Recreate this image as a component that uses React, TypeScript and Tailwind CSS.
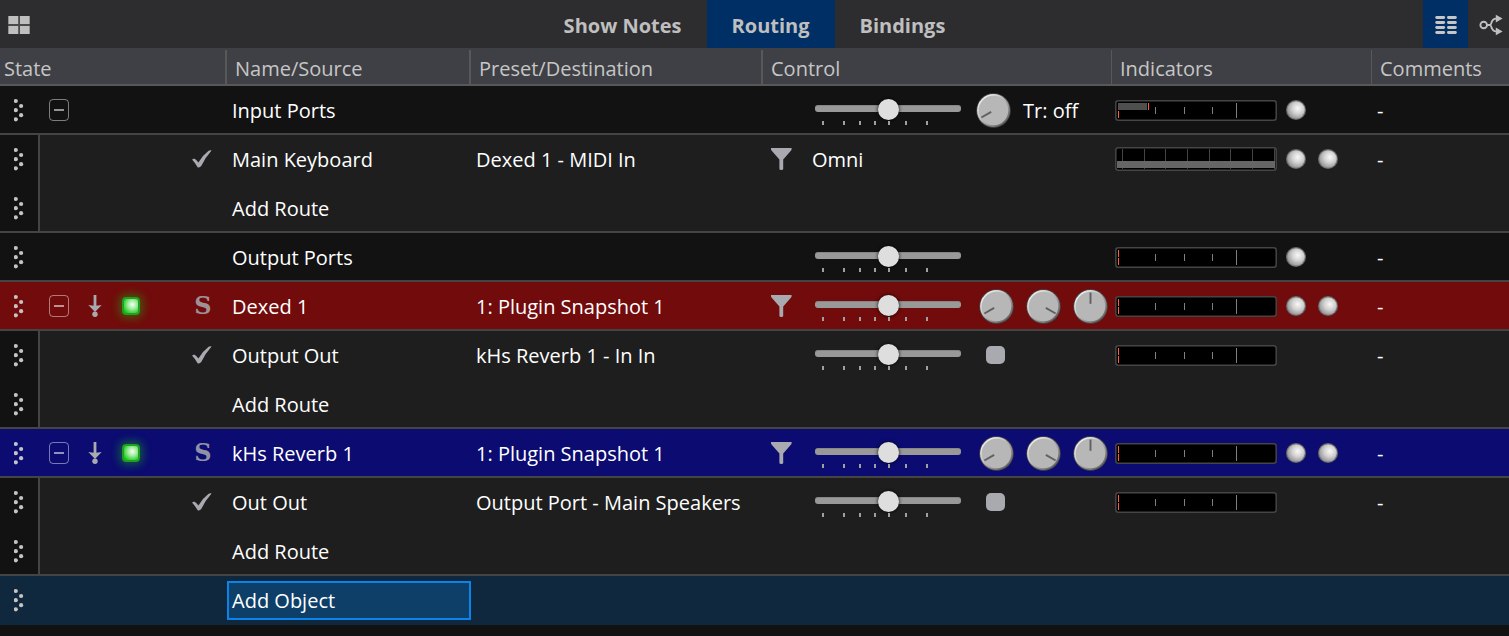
import type { ReactNode } from "react";

type Tone = "dark" | "child" | "red" | "blue" | "selected";

interface Row {
  tone: Tone;
  name: string;
  preset?: string;
  closesGroup?: boolean;
  collapsible?: boolean;
  active?: boolean;
  checked?: boolean;
  filter?: boolean;
  filterText?: string;
  fader?: boolean;
  transpose?: string;
  knobs?: number[];
  pad?: boolean;
  meter?: "audio" | "level" | "midi";
  lamps?: number;
  comment?: string;
}

const rows: Row[] = [
  { tone: "dark", name: "Input Ports", closesGroup: true, collapsible: true, fader: true, transpose: "Tr: off", meter: "level", lamps: 1, comment: "-" },
  { tone: "child", name: "Main Keyboard", preset: "Dexed 1 - MIDI In", checked: true, filter: true, filterText: "Omni", meter: "midi", lamps: 2, comment: "-" },
  { tone: "child", name: "Add Route", closesGroup: true },
  { tone: "dark", name: "Output Ports", closesGroup: true, fader: true, meter: "audio", lamps: 1, comment: "-" },
  { tone: "red", name: "Dexed 1", preset: "1: Plugin Snapshot 1", closesGroup: true, collapsible: true, active: true, filter: true, fader: true, knobs: [-120, 120, 0], meter: "audio", lamps: 2, comment: "-" },
  { tone: "child", name: "Output Out", preset: "kHs Reverb 1 - In In", checked: true, fader: true, pad: true, meter: "audio", comment: "-" },
  { tone: "child", name: "Add Route", closesGroup: true },
  { tone: "blue", name: "kHs Reverb 1", preset: "1: Plugin Snapshot 1", closesGroup: true, collapsible: true, active: true, filter: true, fader: true, knobs: [-120, 120, 0], meter: "audio", lamps: 2, comment: "-" },
  { tone: "child", name: "Out Out", preset: "Output Port - Main Speakers", checked: true, fader: true, pad: true, meter: "audio", comment: "-" },
  { tone: "child", name: "Add Route", closesGroup: true },
  { tone: "selected", name: "Add Object" },
];

const toneClass: Record<Tone, string> = {
  dark: "bg-[#121212]",
  child: "bg-[#1e1e1e]",
  red: "bg-[#720b0b]",
  blue: "bg-[#0b0b72]",
  selected: "bg-[#0f283e]",
};

function DragHandle() {
  return (
    <svg width="12" height="24" viewBox="0 0 12 24" fill="#c4c4c4" aria-hidden="true">
      <circle cx="1.8" cy="3" r="2.1" />
      <circle cx="7.1" cy="8" r="2.1" />
      <circle cx="1.8" cy="12.2" r="2.1" />
      <circle cx="7.1" cy="17.2" r="2.1" />
      <circle cx="1.8" cy="21.3" r="2.1" />
    </svg>
  );
}

function ArrowDown() {
  return (
    <svg width="14" height="22" viewBox="0 0 14 22" fill="#a9aab0" aria-hidden="true">
      <rect x="5.6" y="0" width="2.8" height="11" />
      <path d="M0.3 10 Q7 11.6 13.7 10 L7 17 Z" />
      <circle cx="7" cy="19.2" r="2.7" />
    </svg>
  );
}

function Check() {
  return (
    <svg width="20" height="18" viewBox="0 0 20 18" fill="#a9aab0" aria-hidden="true">
      <path d="M0.2 9.8 Q0.8 8.2 2.6 8.8 Q4.6 10.2 6.4 12.4 Q11 5 16.6 0.8 Q18.4 -0.2 19.6 0.6 Q13.4 7.4 9.4 15.8 Q7.6 18 5.6 17.2 Q3.4 13.2 0.2 9.8 Z" />
    </svg>
  );
}

function Funnel() {
  return (
    <svg width="21" height="22" viewBox="0 0 21 22" fill="#a9aab0" aria-hidden="true">
      <path d="M0 0 H20.6 V1.4 Q20.2 2.6 19.2 3.4 L12.2 11.4 V21 Q12.2 22 10.3 22 Q8.4 22 8.4 21 V11.4 L1.4 3.4 Q0.4 2.6 0 1.4 Z" />
    </svg>
  );
}

function Fader({ label }: { label: string }) {
  return (
    <div className="flex w-[146px] shrink-0 flex-col">
      <input
        type="range"
        defaultValue={50}
        aria-label={label}
        className="h-[21px] w-full appearance-none bg-transparent [&::-webkit-slider-runnable-track]:h-[7px] [&::-webkit-slider-runnable-track]:rounded-[3px] [&::-webkit-slider-runnable-track]:border-t [&::-webkit-slider-runnable-track]:border-[#868686] [&::-webkit-slider-runnable-track]:bg-[#999999] [&::-webkit-slider-thumb]:-mt-[7px] [&::-webkit-slider-thumb]:size-[21px] [&::-webkit-slider-thumb]:appearance-none [&::-webkit-slider-thumb]:rounded-full [&::-webkit-slider-thumb]:bg-[#dedede] [&::-webkit-slider-thumb]:shadow-[0_0_3px_1px_rgba(0,0,0,0.5)]"
      />
      <svg width="146" height="6" viewBox="0 0 146 6" fill="#a0a0a0" aria-hidden="true">
        {[7, 28, 44, 59, 73, 90, 111].map((x) => (
          <rect key={x} x={x} y="2" width="2" height="4" />
        ))}
      </svg>
    </div>
  );
}

function Knob({ angle, label }: { angle: number; label: string }) {
  return (
    <button type="button" aria-label={label} className="size-[35px] shrink-0">
      <svg width="35" height="35" viewBox="0 0 35 35" aria-hidden="true">
        <defs>
          <linearGradient id="knobRim" x1="0.15" y1="0.15" x2="0.85" y2="0.85">
            <stop offset="0" stopColor="#eeeeee" />
            <stop offset="0.5" stopColor="#b4b4b4" />
            <stop offset="1" stopColor="#666666" />
          </linearGradient>
        </defs>
        <circle cx="17.5" cy="17.5" r="17.2" fill="#4a4a4a" />
        <circle cx="17.5" cy="17.5" r="16.4" fill="url(#knobRim)" />
        <circle cx="17.5" cy="17.5" r="14.8" fill="#b7b7b7" />
        <path d="M17.5 3.5 V14.8" stroke="#606060" strokeWidth="1.9" transform={`rotate(${angle} 17.5 17.5)`} />
      </svg>
    </button>
  );
}

function Meter({ kind }: { kind: "audio" | "level" | "midi" }) {
  if (kind === "midi") {
    return (
      <svg width="162" height="24" viewBox="0 0 162 24" role="img" aria-label="MIDI activity">
        <rect x="0.8" y="0.8" width="160.4" height="22.4" rx="2.5" fill="#000000" stroke="#454545" strokeWidth="1.5" />
        {[7, 29, 50, 72, 94, 115, 137, 159].map((x) => (
          <rect key={x} x={x} y="2" width="1" height="20" fill="#444444" />
        ))}
        <rect x="2" y="14" width="158" height="7" fill="#666666" />
      </svg>
    );
  }
  const level = kind === "level";
  return (
    <svg width="162" height="21" viewBox="0 0 162 21" role="img" aria-label="Audio level">
      <rect x="0.8" y="0.8" width="160.4" height="19.4" rx="2.5" fill="#000000" stroke="#454545" strokeWidth="1.5" />
      {level && <rect x="3" y="3" width="29" height="7" fill="#4f4f4f" />}
      <rect x={level ? 33 : 3} y="3" width="1" height="7" fill="#ff5e3a" />
      <rect x="3" y="11" width="1" height="7" fill="#ff5e3a" />
      {[40, 69, 97].map((x) => (
        <rect key={x} x={x} y="7" width="1" height="7" fill="#808080" />
      ))}
      <rect x="121" y="3" width="1" height="15" fill="#808080" />
    </svg>
  );
}

function Lamp() {
  return (
    <svg width="20" height="20" viewBox="0 0 20 20" aria-hidden="true">
      <defs>
        <radialGradient id="lampFace" cx="0.6" cy="0.4" r="0.62">
          <stop offset="0" stopColor="#f8f8f8" />
          <stop offset="0.5" stopColor="#d2d2d2" />
          <stop offset="1" stopColor="#989898" />
        </radialGradient>
      </defs>
      <circle cx="10" cy="10" r="10" fill="#6c6c6c" />
      <circle cx="10" cy="10" r="8.8" fill="url(#lampFace)" />
    </svg>
  );
}

function StateCell({ row }: { row: Row }) {
  return (
    <div className="flex h-6 items-center pr-[15px] pl-[9px]">
      {row.collapsible && (
        <button
          type="button"
          aria-label={`Collapse ${row.name}`}
          className="flex h-[22px] w-5 items-center justify-center rounded-[4px] border border-white/45"
        >
          <span className="h-0.5 w-2.5 bg-white/55" />
        </button>
      )}
      {row.active && (
        <>
          <span className="ml-[19px]">
            <ArrowDown />
          </span>
          <button
            type="button"
            aria-label={`Bypass ${row.name}`}
            className="ml-5 size-[18px] rounded-[4px] border-2 border-[#1fa01f] bg-[radial-gradient(circle_at_60%_40%,#f4fff4_0%,#a6eda6_35%,#12c812_85%,#08b408_100%)] shadow-[0_0_8px_3px_rgba(30,170,20,0.45)]"
          />
          <button
            type="button"
            aria-label={`Solo ${row.name}`}
            className="ml-auto w-[18px] text-center font-['DejaVu_Serif',serif] text-[24px] leading-6 font-bold text-[#a9aab0]/85"
          >
            S
          </button>
        </>
      )}
      {row.checked && (
        <button type="button" aria-label={`Enable ${row.name}`} className="ml-auto">
          <Check />
        </button>
      )}
    </div>
  );
}

function ControlCell({ row }: { row: Row }) {
  return (
    <div className="flex h-9 items-center pl-2">
      <span className="w-[41px] shrink-0">{row.filter && <Funnel />}</span>
      <span className="pt-0.5">{row.filterText}</span>
      {row.fader && (
        <div className="ml-[3px] pt-[3px]">
          <Fader label={`${row.name} volume`} />
        </div>
      )}
      {row.transpose && (
        <>
          <span className="ml-[15px] flex">
            <Knob angle={-120} label="Input gain" />
          </span>
          <span className="ml-3 pt-0.5">{row.transpose}</span>
        </>
      )}
      {row.knobs && (
        <div className="ml-[18px] flex gap-3">
          {row.knobs.map((angle, i) => (
            <Knob key={i} angle={angle} label={`${row.name} knob ${i + 1}`} />
          ))}
        </div>
      )}
      {row.pad && (
        <button type="button" aria-label={`${row.name} mode`} className="ml-[25px] h-[18px] w-[19px] rounded-[5px] bg-[#a9aab0]" />
      )}
    </div>
  );
}

function HeaderCell({ children, span, thin, last }: { children: ReactNode; span?: number; thin?: boolean; last?: boolean }) {
  const edge = last ? "" : thin ? "border-r border-[#585858]" : "border-r-2 border-[#585858]";
  return (
    <th colSpan={span} scope="col" className="border-b-2 border-[#585858] p-0 pt-0.5 text-left font-normal">
      <div className={`flex h-[34px] items-center pt-1 ${span ? "pl-1" : "pl-2"} ${edge}`}>{children}</div>
    </th>
  );
}

function RoutingRow({ row }: { row: Row }) {
  const line = row.closesGroup ? "border-[#444444]" : "border-transparent";
  const cell = `border-b-2 p-0 pt-px ${line}`;
  return (
    <tr className={`h-[49px] ${toneClass[row.tone]}`}>
      <td className={row.tone === "child" ? "border-r-2 border-[#444444] bg-[#121212] p-0" : `${cell}`}>
        <div className={row.tone === "child" ? `flex h-[49px] items-center border-b-2 pt-px pl-3.5 ${line}` : "flex pl-3.5"}>
          <DragHandle />
        </div>
      </td>
      <td className={cell}>
        <StateCell row={row} />
      </td>
      <td className={cell}>
        {row.tone === "selected" ? (
          <button type="button" className="flex h-[39px] w-full items-center border-2 border-[#0a84ea] bg-[#0e3f69] pt-0.5 pl-[3px]">
            {row.name}
          </button>
        ) : (
          <div className="pt-0.5 pl-[5px]">{row.name}</div>
        )}
      </td>
      <td className={cell}>
        <div className="pt-0.5 pl-[5px]">{row.preset}</div>
      </td>
      <td className={cell}>
        <ControlCell row={row} />
      </td>
      <td className={cell}>
        <div className="flex items-center pl-[3px]">
          {row.meter && <Meter kind={row.meter} />}
          {row.lamps && (
            <div className="ml-[9px] flex gap-3">
              {Array.from({ length: row.lamps }, (_, i) => (
                <Lamp key={i} />
              ))}
            </div>
          )}
        </div>
      </td>
      <td className={cell}>
        <div className="pt-0.5 pl-[5px]">{row.comment}</div>
      </td>
    </tr>
  );
}

export default function App() {
  return (
    <div className="min-h-screen bg-[#121212] font-['Open_Sans',sans-serif] text-[20px] leading-7 text-white">
      <header className="grid h-12 grid-cols-[1fr_auto_1fr] bg-[#2d2d2f] text-[#bfbfbf]">
        <button type="button" aria-label="Views" className="flex items-center pt-0.5 pl-2">
          <svg width="22" height="18" viewBox="0 0 22 18" fill="#bfbfbf" aria-hidden="true">
            <rect width="22" height="18" fill="#4a4a4b" />
            <rect x="0.4" width="9.8" height="8" />
            <rect x="12" width="9.6" height="8" />
            <rect x="0.4" y="10" width="9.8" height="8" />
            <rect x="12" y="10" width="9.6" height="8" />
          </svg>
        </button>
        <nav className="flex font-bold">
          <button type="button" className="px-[25px] pt-1">Show Notes</button>
          <button type="button" className="bg-[#002f66] px-[25px] pt-1">Routing</button>
          <button type="button" className="px-[25px] pt-1">Bindings</button>
        </nav>
        <div className="flex justify-end">
          <button type="button" aria-label="List view" className="flex w-[45px] items-center justify-center bg-[#002f66] pt-0.5">
            <svg width="22" height="18" viewBox="0 0 22 18" fill="#c6c6c6" aria-hidden="true">
              {[0, 5, 10, 15].map((y) => (
                <g key={y}>
                  <rect x="0.3" y={y} width="9.8" height="3" rx="1.4" />
                  <rect x="12" y={y} width="9.8" height="3" rx="1.4" />
                </g>
              ))}
            </svg>
          </button>
          <button type="button" aria-label="Graph view" className="flex w-[41px] items-center justify-center pt-0.5 pl-1">
            <svg width="24" height="22" viewBox="0 0 24 22" fill="none" stroke="#bfbfbf" strokeWidth="1.9" aria-hidden="true">
              <circle cx="4.7" cy="11" r="3.3" />
              <path d="M8 11 H11 C13 11 11.6 4.6 17 4.6 M11 11 C13 11 11.6 17.4 17 17.4" />
              <path d="M16.8 0.7 L23.6 4.6 L16.8 8.5 Z M16.8 13.5 L23.6 17.4 L16.8 21.3 Z" fill="#bfbfbf" stroke="none" />
            </svg>
          </button>
        </div>
      </header>
      <table className="w-full table-fixed border-separate border-spacing-0">
        <colgroup>
          <col className="w-10" />
          <col className="w-[187px]" />
          <col className="w-[244px]" />
          <col className="w-[292px]" />
          <col className="w-[349px]" />
          <col className="w-[260px]" />
          <col />
        </colgroup>
        <thead className="bg-[#3f4045] text-[#c6c6c6]">
          <tr>
            <HeaderCell span={2}>State</HeaderCell>
            <HeaderCell>Name/Source</HeaderCell>
            <HeaderCell>Preset/Destination</HeaderCell>
            <HeaderCell thin>Control</HeaderCell>
            <HeaderCell thin>Indicators</HeaderCell>
            <HeaderCell last>Comments</HeaderCell>
          </tr>
        </thead>
        <tbody>
          {rows.map((row, i) => (
            <RoutingRow key={i} row={row} />
          ))}
        </tbody>
      </table>
    </div>
  );
}
